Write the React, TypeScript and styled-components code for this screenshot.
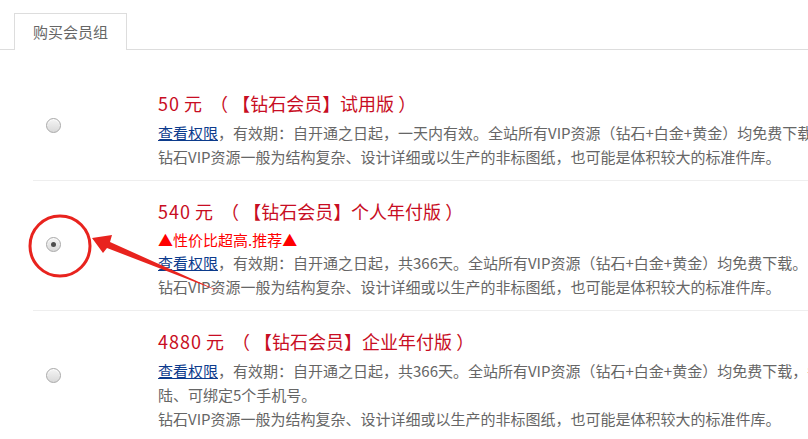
import React from "react";
import styled, { createGlobalStyle } from "styled-components";

const GlobalStyle = createGlobalStyle`
  html, body {
    margin: 0;
    padding: 0;
    background: #fff;
    overflow: hidden;
  }
  body {
    font-family: "Noto Sans CJK SC", "Microsoft YaHei", "Noto Sans", sans-serif;
    color: #666;
  }
`;

const Page = styled.div`
  position: relative;
  width: 808px;
  height: 439px;
  overflow: hidden;
`;

const TabBar = styled.div`
  display: flex;
  padding: 13px 0 0 14px;
  border-bottom: 1px solid #ddd;
`;

const Tab = styled.div`
  height: 36px;
  line-height: 36px;
  padding: 0 18px;
  margin-bottom: -1px;
  border: 1px solid #ddd;
  border-bottom: none;
  background: #fff;
  font-size: 15px;
  color: #666;
  white-space: nowrap;
`;

const List = styled.div`
  padding: 23px 0 0 33px;
`;

const Row = styled.div`
  display: flex;
  align-items: center;
  padding: 12px 0 11px;
  border-top: 1px solid #eee;

  &:first-child {
    border-top: none;
  }
`;

const RadioCell = styled.div`
  flex: 0 0 125px;
  padding-left: 13px;
  box-sizing: border-box;
  display: flex;
  align-items: center;
  margin-top: -3px;
`;

const Radio = styled.span<{ $checked?: boolean }>`
  position: relative;
  width: 15px;
  height: 15px;
  box-sizing: border-box;
  border-radius: 50%;
  border: 1px solid #a9a9a9;
  background: linear-gradient(#f4f4f4, #d9d9d9);
  box-shadow: inset 0 1px 1px rgba(255, 255, 255, 0.8);

  &::after {
    content: "";
    display: ${(p) => (p.$checked ? "block" : "none")};
    position: absolute;
    left: 4px;
    top: 4px;
    width: 5px;
    height: 5px;
    border-radius: 50%;
    background: #4d4d4d;
  }
`;

const Content = styled.div`
  flex: 1;
  min-width: 0;
`;

const Title = styled.div`
  font-size: 18px;
  line-height: 36px;
  color: #c80d23;
  white-space: pre;

  b {
    font-weight: normal;
    letter-spacing: 1px;
  }
`;

const Tag = styled.div`
  font-size: 15px;
  line-height: 22px;
  color: #f00;
  white-space: nowrap;
`;

const Desc = styled.div`
  font-size: 15px;
  line-height: 24px;
  color: #666;
  white-space: nowrap;
`;

const Link = styled.a`
  color: #0c3b8c;
  text-decoration: underline;
`;

const Overlay = styled.svg`
  position: absolute;
  left: 0;
  top: 0;
  pointer-events: none;
`;

type Plan = {
  price: string;
  name: string;
  tag?: string;
  lines: string[];
  checked?: boolean;
};

const NOTE = "钻石VIP资源一般为结构复杂、设计详细或以生产的非标图纸，也可能是体积较大的标准件库。";

const plans: Plan[] = [
  {
    price: "50",
    name: "（ 【钻石会员】试用版 ）",
    lines: ["，有效期：自开通之日起，一天内有效。全站所有VIP资源（钻石+白金+黄金）均免费下载。", NOTE],
  },
  {
    price: "540",
    name: "（ 【钻石会员】个人年付版 ）",
    tag: "▲性价比超高.推荐▲",
    lines: ["，有效期：自开通之日起，共366天。全站所有VIP资源（钻石+白金+黄金）均免费下载。", NOTE],
    checked: true,
  },
  {
    price: "4880",
    name: "（ 【钻石会员】企业年付版 ）",
    lines: [
      "，有效期：自开通之日起，共366天。全站所有VIP资源（钻石+白金+黄金）均免费下载，每个账号可在2台设备登",
      "陆、可绑定5个手机号。",
      NOTE,
    ],
  },
];

export default function App() {
  return (
    <Page>
      <GlobalStyle />
      <TabBar>
        <Tab>购买会员组</Tab>
      </TabBar>
      <List>
        {plans.map((plan) => (
          <Row key={plan.price}>
            <RadioCell>
              <Radio $checked={plan.checked} />
            </RadioCell>
            <Content>
              <Title>
                <b>{plan.price}</b> 元  {plan.name}
              </Title>
              {plan.tag && <Tag>{plan.tag}</Tag>}
              {plan.lines.map((line, i) => (
                <Desc key={i}>
                  {i === 0 && <Link href="#">查看权限</Link>}
                  {line}
                </Desc>
              ))}
            </Content>
          </Row>
        ))}
      </List>
      <Overlay width="808" height="439" viewBox="0 0 808 439">
        <circle cx="60" cy="246" r="30" fill="none" stroke="#e8231e" strokeWidth="3" />
        <polygon points="92,238 112,235 110,242 221,292 107,248 103,253" fill="#e8231e" />
      </Overlay>
    </Page>
  );
}
